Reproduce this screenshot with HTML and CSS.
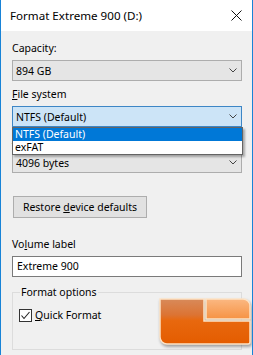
FILE: index.html
```html
<!DOCTYPE html>
<html lang="en">
<head>
    <meta charset="UTF-8">
    <title>Format Extreme 900 (D:)</title>
    <link rel="stylesheet" href="styles.css">
</head>
<body>

<div class="window">
    <header class="titlebar">
        <span class="title">Format Extreme 900 (D:)</span>
        <svg class="close" width="11" height="11" viewBox="0 0 11 11">
            <path d="M0.5 0.5 L10.5 10.5 M10.5 0.5 L0.5 10.5" stroke="#111" stroke-width="1" fill="none"/>
        </svg>
    </header>

    <main class="panel">
        <div class="field">
            <div class="label">Capacity:</div>
            <div class="combo">
                <span>894 GB</span>
                <svg class="chevron" width="8" height="5" viewBox="0 0 8 5"><path d="M0.5 0.5 L4 4 L7.5 0.5" stroke="#444" fill="none"/></svg>
            </div>
        </div>

        <div class="field">
            <div class="label"><u>F</u>ile system</div>
            <div class="combo-wrap">
                <div class="combo combo-focus">
                    <span>NTFS (Default)</span>
                    <svg class="chevron" width="8" height="5" viewBox="0 0 8 5"><path d="M0.5 0.5 L4 4 L7.5 0.5" stroke="#444" fill="none"/></svg>
                </div>
                <ul class="dropdown">
                    <li class="selected">NTFS (Default)</li>
                    <li>exFAT</li>
                </ul>
            </div>
        </div>

        <div class="field">
            <div class="label"><u>A</u>llocation unit size</div>
            <div class="combo">
                <span>4096 bytes</span>
                <svg class="chevron" width="8" height="5" viewBox="0 0 8 5"><path d="M0.5 0.5 L4 4 L7.5 0.5" stroke="#444" fill="none"/></svg>
            </div>
        </div>

        <button class="btn">Restore <u>d</u>evice defaults</button>

        <div class="field field-volume">
            <div class="label">Vo<u>l</u>ume label</div>
            <div class="textbox">Extreme 900</div>
        </div>

        <fieldset class="group">
            <legend>Format options</legend>
            <div class="check">
                <svg class="box" width="13" height="13" viewBox="0 0 13 13">
                    <rect x="0.5" y="0.5" width="12" height="12" fill="#fff" stroke="#333"/>
                    <path d="M2.5 6.5 L5 9.5 L10.5 3" stroke="#222" stroke-width="1.1" fill="none"/>
                </svg>
                <span><u>Q</u>uick Format</span>
            </div>
        </fieldset>
    </main>

    <svg class="logo" width="96" height="56" viewBox="0 0 96 56">
        <defs>
            <linearGradient id="lg-big" x1="0" y1="0" x2="0" y2="1">
                <stop offset="0" stop-color="#d88a5a"/>
                <stop offset="0.35" stop-color="#dc7434"/>
                <stop offset="0.48" stop-color="#e8680e"/>
                <stop offset="1" stop-color="#e45c00"/>
            </linearGradient>
            <linearGradient id="lg-small" x1="0" y1="0" x2="0" y2="1">
                <stop offset="0" stop-color="#fbb882"/>
                <stop offset="1" stop-color="#f69344"/>
            </linearGradient>
        </defs>
        <path d="M3 3 H47 V25 H93 V46 Q93 48 91 48 H10 A7 7 0 0 1 3 41 Z" fill="url(#lg-big)" stroke="#fde3c6" stroke-width="1.5"/>
        <path d="M49 3 H86 A7 7 0 0 1 93 10 V23 H49 Z" fill="url(#lg-small)" stroke="#fde3c6" stroke-width="1.5"/>
    </svg>
</div>

</body>
</html>
```

FILE: styles.css
```css
html, body {
    margin: 0;
    padding: 0;
    background: #f0f0f0;
}
body {
    font-family: "Noto Sans", "Open Sans", sans-serif;
    font-size: 10.5px;
    color: #000;
}
.window {
    position: relative;
    width: 253px;
    height: 355px;
    box-sizing: border-box;
    border-left: 1px solid #1883d7;
    border-right: 1px solid #1883d7;
    background: #f0f0f0;
    overflow: hidden;
}
.titlebar {
    height: 31px;
    background: #fff;
    display: flex;
    align-items: center;
    justify-content: space-between;
    padding: 0 10px 0 9px;
}
.title {
    font-size: 11.6px;
    line-height: 15px;
}
.close {
    display: block;
}
.panel {
    padding: 10px 10px 0 11px;
    display: flex;
    flex-direction: column;
}
.field + .field {
    margin-top: 6px;
}
.label {
    line-height: 15px;
    margin-bottom: 4px;
}
.combo {
    height: 21px;
    box-sizing: border-box;
    border: 1px solid #adadad;
    background: #e5e5e5;
    display: flex;
    align-items: center;
    justify-content: space-between;
    padding: 0 4px 0 3px;
}
.combo-focus {
    background: #cce4f7;
    border-color: #3d86c6;
}
.chevron {
    display: block;
}
.combo-wrap {
    position: relative;
}
.dropdown {
    position: absolute;
    left: 0;
    right: -1px;
    top: 100%;
    margin: 0;
    padding: 0;
    list-style: none;
    background: #fff;
    border: 1px solid #646464;
    box-shadow: 2px 2px 2px rgba(0, 0, 0, 0.3);
    z-index: 2;
}
.dropdown li {
    line-height: 13px;
    padding-left: 2px;
}
.dropdown .selected {
    background: #0078d7;
    color: #fff;
}
.btn {
    align-self: flex-start;
    margin: 23px 0 0 1px;
    height: 22px;
    width: 134px;
    border: 1px solid #adadad;
    background: #e1e1e1;
    font: inherit;
    color: #000;
    padding: 0;
}
.field-volume {
    margin-top: 19px;
}
.textbox {
    height: 21px;
    box-sizing: border-box;
    border: 1px solid #7a7a7a;
    background: #fff;
    line-height: 19px;
    padding-left: 4px;
}
.group {
    margin: 8px 0 0;
    padding: 0 6px;
    height: 65px;
    box-sizing: border-box;
    border: 1px solid #dcdcdc;
    min-width: 0;
}
.group legend {
    padding: 0 1px;
    margin-left: 1px;
    line-height: 15px;
}
.check {
    display: flex;
    align-items: center;
    gap: 3px;
    margin-top: 8px;
    line-height: 15px;
}
.box {
    display: block;
}
.logo {
    position: absolute;
    left: 156px;
    top: 296px;
    filter: drop-shadow(1px 2px 1.5px rgba(0, 0, 0, 0.35));
}
```
